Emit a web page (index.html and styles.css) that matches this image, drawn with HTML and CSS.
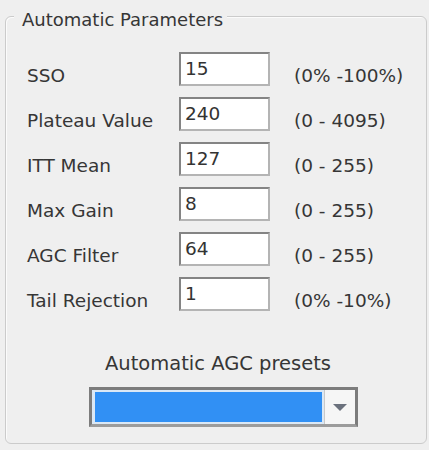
FILE: index.html
```html
<!DOCTYPE html>
<html>
<head>
<meta charset="utf-8">
<link rel="stylesheet" href="styles.css">
</head>
<body>
<fieldset class="group">
  <legend class="group-title">Automatic Parameters</legend>
  <div class="params">
    <span class="label">SSO</span><span class="field">15</span><span class="range">(0% -100%)</span>
    <span class="label">Plateau Value</span><span class="field">240</span><span class="range">(0 - 4095)</span>
    <span class="label">ITT Mean</span><span class="field">127</span><span class="range">(0 - 255)</span>
    <span class="label">Max Gain</span><span class="field">8</span><span class="range">(0 - 255)</span>
    <span class="label">AGC Filter</span><span class="field">64</span><span class="range">(0 - 255)</span>
    <span class="label">Tail Rejection</span><span class="field">1</span><span class="range">(0% -10%)</span>
  </div>
  <div class="presets-caption">Automatic AGC presets</div>
  <div class="combo">
    <div class="combo-value"></div>
    <div class="combo-btn">
      <svg width="14" height="7" viewBox="0 0 14 7"><polygon points="0,0 14,0 7,7" fill="#6b717d"/></svg>
    </div>
  </div>
</fieldset>
</body>
</html>
```
FILE: styles.css
```css
html, body {
  margin: 0;
  padding: 0;
  background: #efefef;
}
body {
  padding-top: 3px;
  font-family: "DejaVu Sans", sans-serif;
  font-size: 18.5px;
  color: #363636;
}
.group {
  box-sizing: border-box;
  width: 422px;
  margin: 0 0 0 5px;
  padding: 22px 21px 16px 21px;
  border: 1px solid #cbcbcb;
  border-radius: 6px;
  box-shadow: inset 1px 1px 0 #fbfbfb;
  min-inline-size: 0;
}
.group-title {
  margin-left: -13px;
  padding: 7px 4px 0 8px;
  font-size: 18px;
  line-height: 20px;
  background: #efefef;
  color: #363636;
}
.params {
  display: grid;
  grid-template-columns: 152px 91px 1fr;
  grid-auto-rows: 34px;
  row-gap: 11px;
  align-items: center;
}
.label, .range {
  padding-top: 13px;
  line-height: 20px;
  white-space: nowrap;
}
.range {
  padding-left: 24px;
}
.field {
  box-sizing: border-box;
  height: 34px;
  padding: 0 4px;
  line-height: 30px;
  background: #fff;
  border: 2px solid #b4b4b4;
  border-top-color: #848484;
  border-left-color: #848484;
  color: #333;
}
.presets-caption {
  margin-top: 43px;
  line-height: 20px;
  font-size: 19.5px;
  text-align: center;
  padding-left: 4px;
}
.combo {
  box-sizing: border-box;
  display: flex;
  width: 269px;
  height: 40px;
  margin: 13px 0 0 62px;
  padding: 2px 0 2px 3px;
  background: #dbe8f5;
  border: 3px solid #7c7c7c;
  border-bottom-color: #9c9c9c;
}
.combo-value {
  width: 227px;
  background: #3190f4;
}
.combo-btn {
  box-sizing: border-box;
  width: 31px;
  margin-left: 2px;
  margin-top: -2px;
  margin-bottom: -2px;
  background: #f6f6f6;
  border-left: 1px solid #c9c9c9;
  display: flex;
  align-items: center;
  justify-content: center;
}
```
